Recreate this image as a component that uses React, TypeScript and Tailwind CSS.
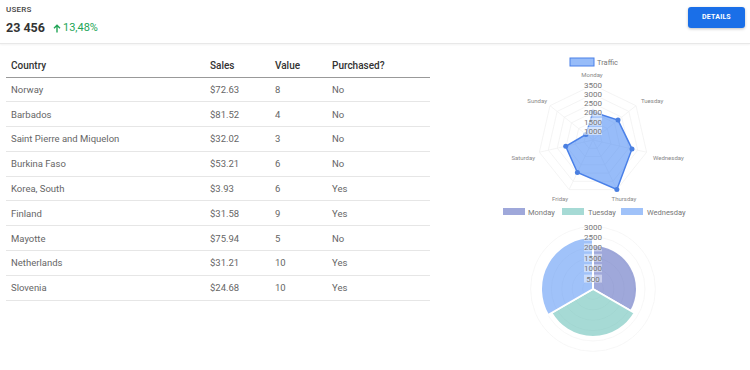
import React from "react";

const rows = [
  { country: "Norway", sales: "$72.63", value: 8, purchased: "No" },
  { country: "Barbados", sales: "$81.52", value: 4, purchased: "No" },
  { country: "Saint Pierre and Miquelon", sales: "$32.02", value: 3, purchased: "No" },
  { country: "Burkina Faso", sales: "$53.21", value: 6, purchased: "No" },
  { country: "Korea, South", sales: "$3.93", value: 6, purchased: "Yes" },
  { country: "Finland", sales: "$31.58", value: 9, purchased: "Yes" },
  { country: "Mayotte", sales: "$75.94", value: 5, purchased: "No" },
  { country: "Netherlands", sales: "$31.21", value: 10, purchased: "Yes" },
  { country: "Slovenia", sales: "$24.68", value: 10, purchased: "Yes" },
];

const days = [
  { name: "Monday", r: 28, lx: 99, ly: 20, anchor: "middle" },
  { name: "Tuesday", r: 32, lx: 148, ly: 46, anchor: "start" },
  { name: "Wednesday", r: 40, lx: 160, ly: 103, anchor: "start" },
  { name: "Thursday", r: 55, lx: 131, ly: 144, anchor: "middle" },
  { name: "Friday", r: 36, lx: 67, ly: 144, anchor: "middle" },
  { name: "Saturday", r: 28, lx: 42, ly: 103, anchor: "end" },
  { name: "Sunday", r: 9, lx: 54, ly: 46, anchor: "end" },
];

const pt = (i: number, r: number, cx: number, cy: number) => {
  const a = (i * 2 * Math.PI) / 7;
  return [cx + r * Math.sin(a), cy - r * Math.cos(a)];
};

const RadarChart: React.FC = () => {
  const cx = 100;
  const cy = 85;
  const step = 9.17;
  const rings = [1, 2, 3, 4, 5, 6].map((k) => k * step);
  const poly = days.map((d, i) => pt(i, d.r, cx, cy).join(",")).join(" ");
  const ticks = ["1000", "1500", "2000", "2500", "3000", "3500"];
  return (
    <svg width="200" height="150" viewBox="0 0 200 150" style={{ fontFamily: "Roboto, sans-serif" }}>
      <rect x="77" y="3" width="24" height="8" fill="#4285f4" fillOpacity="0.55" stroke="#4a80e8" strokeWidth="1" />
      <text x="104" y="10" fontSize="7.5" fill="#777">Traffic</text>
      {rings.map((r, k) => (
        <polygon
          key={k}
          points={days.map((_, i) => pt(i, r, cx, cy).join(",")).join(" ")}
          fill="none"
          stroke="#f1f1f1"
          strokeWidth="0.8"
        />
      ))}
      {days.map((_, i) => {
        const [x, y] = pt(i, rings[5], cx, cy);
        return <line key={i} x1={cx} y1={cy} x2={x} y2={y} stroke="#f1f1f1" strokeWidth="0.8" />;
      })}
      <polygon points={poly} fill="#4285f4" fillOpacity="0.55" stroke="#4a80e8" strokeWidth="1.5" />
      {days.map((d, i) => {
        const [x, y] = pt(i, d.r, cx, cy);
        return <circle key={d.name} cx={x} cy={y} r="2.5" fill="#4a7fe0" />;
      })}
      {ticks.map((t, k) => (
        <g key={t}>
          <rect x={cx - 9} y={cy - rings[k] - 4} width="18" height="8" fill="#fff" fillOpacity="0.6" />
          <text x={cx} y={cy - rings[k] + 3} fontSize="8" fill="#777" textAnchor="middle">
            {t}
          </text>
        </g>
      ))}
      {days.map((d) => (
        <text key={d.name} x={d.lx} y={d.ly + 2} fontSize="6" fill="#888" textAnchor={d.anchor as "middle"}>
          {d.name}
        </text>
      ))}
    </svg>
  );
};

const arc = (cx: number, cy: number, r: number, a0: number, a1: number) => {
  const p = (a: number) => [cx + r * Math.cos((a * Math.PI) / 180), cy + r * Math.sin((a * Math.PI) / 180)];
  const [x0, y0] = p(a0);
  const [x1, y1] = p(a1);
  return `M${cx},${cy} L${x0},${y0} A${r},${r} 0 0 1 ${x1},${y1} Z`;
};

const PolarChart: React.FC = () => {
  const cx = 100;
  const cy = 84;
  const step = 10.4;
  const ticks = ["500", "1000", "1500", "2000", "2500", "3000"];
  return (
    <svg width="200" height="155" viewBox="0 0 200 155" style={{ fontFamily: "Roboto, sans-serif" }}>
      <rect x="10" y="3" width="22" height="7" fill="#3f51b5" fillOpacity="0.5" />
      <text x="35" y="9.5" fontSize="7.5" fill="#777">Monday</text>
      <rect x="69" y="3" width="22" height="7" fill="#4db6ac" fillOpacity="0.5" />
      <text x="95" y="9.5" fontSize="7.5" fill="#777">Tuesday</text>
      <rect x="128" y="3" width="22" height="7" fill="#4285f4" fillOpacity="0.5" />
      <text x="154" y="9.5" fontSize="7.5" fill="#777">Wednesday</text>
      {ticks.map((_, k) => (
        <circle key={k} cx={cx} cy={cy} r={(k + 1) * step} fill="none" stroke="#f5f5f5" strokeWidth="0.8" />
      ))}
      <path d={arc(cx, cy, 44, -90, 30)} fill="#3f51b5" fillOpacity="0.5" stroke="#fff" strokeWidth="2" />
      <path d={arc(cx, cy, 48, 30, 150)} fill="#4db6ac" fillOpacity="0.5" stroke="#fff" strokeWidth="2" />
      <path d={arc(cx, cy, 52, 150, 270)} fill="#4285f4" fillOpacity="0.5" stroke="#fff" strokeWidth="2" />
      {ticks.map((t, k) => (
        <g key={t}>
          <rect x={cx - 9} y={cy - (k + 1) * step - 4} width="18" height="8" fill="#fff" fillOpacity="0.45" />
          <text x={cx} y={cy - (k + 1) * step + 3} fontSize="8" fill="#777" textAnchor="middle">
            {t}
          </text>
        </g>
      ))}
    </svg>
  );
};

const App: React.FC = () => {
  return (
    <div className="w-[750px] h-[370px] bg-white overflow-hidden font-['Roboto',sans-serif]">
      <div className="h-[44px] border-b border-[#e8e8e8] shadow-[0_1px_2px_rgba(0,0,0,0.05)] flex justify-between items-start px-[6px]">
        <div className="pt-[5px]">
          <p className="text-[8px] font-medium text-[#444] leading-[10px] tracking-[0.2px]">USERS</p>
          <div className="flex items-center mt-[6px] leading-[14px]">
            <span className="text-[12.5px] font-bold text-[#333]">23 456</span>
            <span className="ml-[8px] text-[11px] text-[#21a556] flex items-center">
              <svg width="8" height="9" viewBox="0 0 8 9" className="mr-[2px]">
                <path d="M4 8.5V1.5M1 4.3L4 1.3L7 4.3" fill="none" stroke="#21a556" strokeWidth="1.4" />
              </svg>
              13,48%
            </span>
          </div>
        </div>
        <button className="mt-[7px] mr-[-1px] w-[57px] h-[21px] rounded-[3px] bg-[#1a6fe8] shadow-[0_1px_3px_rgba(0,0,0,0.25)] text-white text-[7px] font-bold tracking-[0.2px]">
          DETAILS
        </button>
      </div>
      <div className="flex">
        <div className="w-[424px] ml-[6px] mt-[11px]">
          <table className="w-full border-collapse text-left">
            <thead>
              <tr className="h-[22px] border-b border-[#999]">
                <th className="w-[199px] pl-[5px] text-[10px] font-medium text-[#333]">Country</th>
                <th className="w-[65px] pl-[5px] text-[10px] font-medium text-[#333]">Sales</th>
                <th className="w-[57px] pl-[5px] text-[10px] font-medium text-[#333]">Value</th>
                <th className="pl-[5px] text-[10px] font-medium text-[#333]">Purchased?</th>
              </tr>
            </thead>
            <tbody>
              {rows.map((r) => (
                <tr key={r.country} className="h-[24.8px] border-b border-[#e6e6e6] text-[9.5px] text-[#666]">
                  <td className="pl-[5px] pt-[1px]">{r.country}</td>
                  <td className="pl-[5px] pt-[1px]">{r.sales}</td>
                  <td className="pl-[5px] pt-[1px]">{r.value}</td>
                  <td className="pl-[5px] pt-[1px]">{r.purchased}</td>
                </tr>
              ))}
            </tbody>
          </table>
        </div>
        <div className="flex-1 ml-[6px] mt-[11px] flex flex-col items-center">
          <RadarChart />
          <PolarChart />
        </div>
      </div>
    </div>
  );
};

export default App;
